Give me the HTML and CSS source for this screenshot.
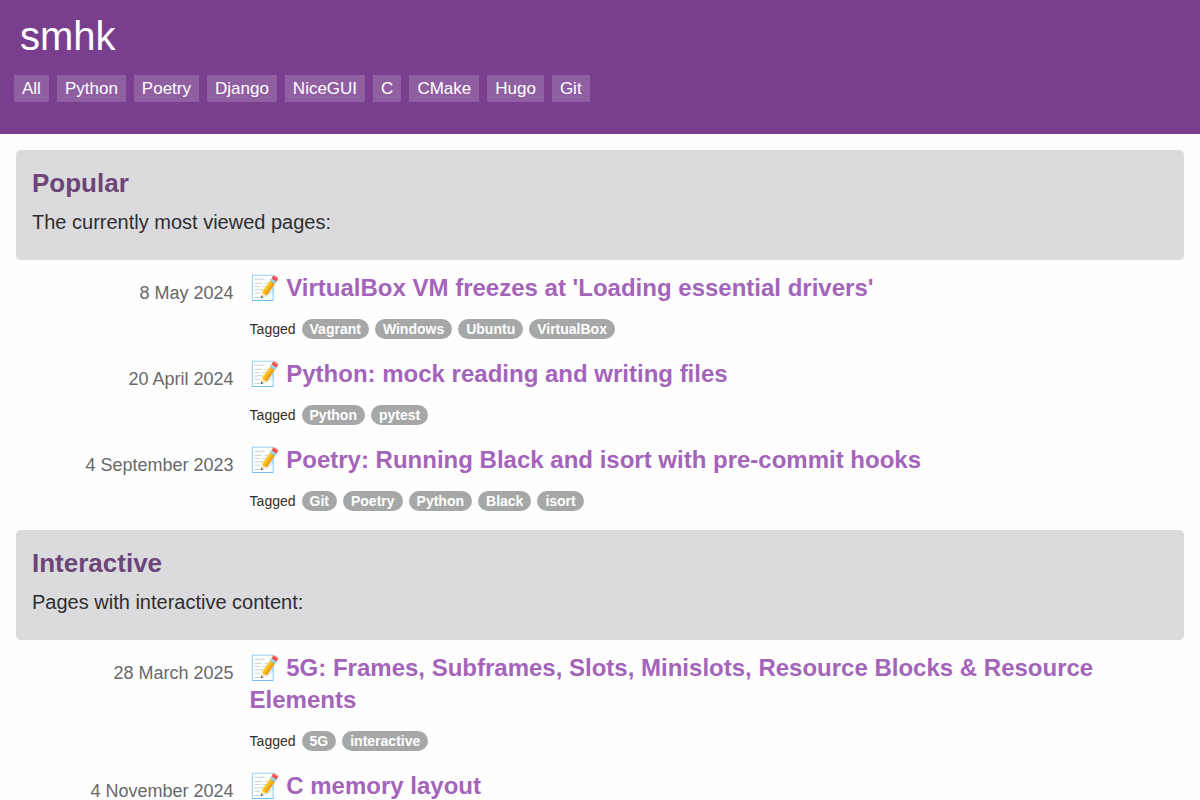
FILE: index.html
```html
<!DOCTYPE html>
<html lang="en">
<head>
<meta charset="utf-8">
<title>smhk</title>
<link rel="stylesheet" href="styles.css">
</head>
<body>
<header class="site-header">
<h1 class="site-title"><a href="#">smhk</a></h1>
<nav class="site-nav"><a href="#">All</a><a href="#">Python</a><a href="#">Poetry</a><a href="#">Django</a><a href="#">NiceGUI</a><a href="#">C</a><a href="#">CMake</a><a href="#">Hugo</a><a href="#">Git</a></nav>
</header>
<main class="content">
<section class="group">
<div class="panel"><h2>Popular</h2><p>The currently most viewed pages:</p></div>
<article class="post"><time>8 May 2024</time><div class="body"><h3><a href="#">📝 VirtualBox VM freezes at 'Loading essential drivers'</a></h3><div class="tags">Tagged <a href="#">Vagrant</a><a href="#">Windows</a><a href="#">Ubuntu</a><a href="#">VirtualBox</a></div></div></article>
<article class="post"><time>20 April 2024</time><div class="body"><h3><a href="#">📝 Python: mock reading and writing files</a></h3><div class="tags">Tagged <a href="#">Python</a><a href="#">pytest</a></div></div></article>
<article class="post"><time>4 September 2023</time><div class="body"><h3><a href="#">📝 Poetry: Running Black and isort with pre-commit hooks</a></h3><div class="tags">Tagged <a href="#">Git</a><a href="#">Poetry</a><a href="#">Python</a><a href="#">Black</a><a href="#">isort</a></div></div></article>
</section>
<section class="group">
<div class="panel"><h2>Interactive</h2><p>Pages with interactive content:</p></div>
<article class="post"><time>28 March 2025</time><div class="body"><h3><a href="#">📝 5G: Frames, Subframes, Slots, Minislots, Resource Blocks &amp; Resource Elements</a></h3><div class="tags">Tagged <a href="#">5G</a><a href="#">interactive</a></div></div></article>
<article class="post"><time>4 November 2024</time><div class="body"><h3><a href="#">📝 C memory layout</a></h3></div></article>
</section>
</main>
</body>
</html>
```
FILE: styles.css
```css
* { box-sizing: border-box; }
body { margin: 0; background: #fefefe; color: #2e2e30; font-family: "Liberation Sans", Arial, sans-serif; }
a { color: inherit; text-decoration: none; }
h1, h2, h3, p { margin: 0; }
.site-header { background: #7a3e8f; color: #fff; padding: 12px 14px 32px; }
.site-title { font-size: 40px; line-height: 48px; font-weight: 400; padding: 0 6px; margin-bottom: 15px; }
.site-nav { display: flex; flex-wrap: wrap; gap: 8px; }
.site-nav a { background: #8f5fa1; padding: 0 8px; font-size: 17px; line-height: 27px; }
.content { display: grid; gap: 12px; padding: 16px 16px 0; }
.panel { background: #dbdbdd; border-radius: 5px; padding: 16px 16px 22px; }
.panel h2 { color: #6c4579; font-size: 26px; line-height: 34px; margin-bottom: 6px; }
.panel p { font-size: 20px; line-height: 32px; }
.post { display: grid; grid-template-columns: 1fr 4fr; padding: 12px 0 7px; }
.post time { color: #68686a; font-size: 18px; line-height: 24px; padding: 9px 16px 0 0; text-align: right; }
.post h3 { color: #a364ba; font-size: 24px; line-height: 32px; }
.tags { display: flex; flex-wrap: wrap; gap: 6px; margin-top: 15px; font-size: 14px; line-height: 20px; }
.tags a { background: #a6a8a7; color: #fff; border-radius: 10px; padding: 0 8px; font-weight: 700; }
```
